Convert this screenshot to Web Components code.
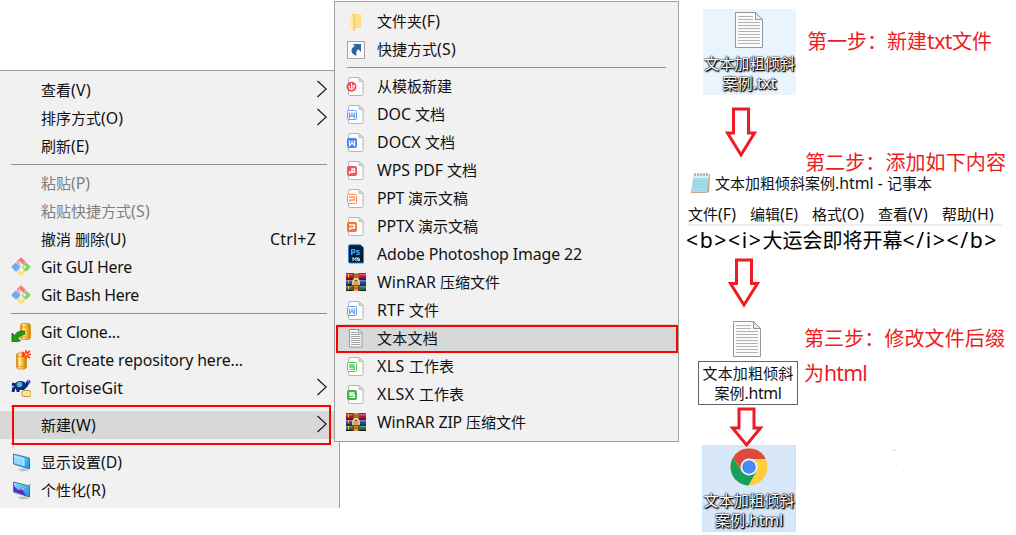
<!DOCTYPE html>
<html lang="zh-CN">
<head>
<meta charset="utf-8">
<title>新建 html 文件</title>
<style>
body{margin:0;background:#fff;width:1016px;height:535px;overflow:hidden;color:#111;font:15px/20px "Noto Sans","Noto Sans CJK SC",sans-serif}
</style>
</head>
<body>
<tutorial-board></tutorial-board>
<script>
const define=(name,html,setup)=>customElements.define(name,class extends HTMLElement{
  connectedCallback(){
    if(this.shadowRoot)return;
    const t=document.createElement('template');t.innerHTML=html;
    this.attachShadow({mode:'open'}).append(t.content.cloneNode(true));
    if(setup)setup(this,this.shadowRoot);
  }
});

/* One line of mixed text: Latin runs are set slightly larger and take up the slack of the width in w. */
define('fit-text','<style>:host{display:block;white-space:pre;width:max-content}div{width:max-content;height:1lh}::slotted(span){line-height:1px}</style><div><slot></slot></div>',(el,root)=>{
  const w=+el.getAttribute('w'),runs=el.textContent.match(/[\x20-\x7e]+|[^\x20-\x7e]+/g)||[];
  const spans=runs.map(r=>{
    const s=document.createElement('span');s.textContent=r;
    if(/^[\x20-\x7e]/.test(r)){s.dataset.latin='';s.style.fontSize='1.06em'}
    return s;
  });
  el.replaceChildren(...spans);
  if(!w)return;
  const latin=spans.filter(s=>'latin' in s.dataset),fit=latin.length?latin:spans;
  const n=fit.reduce((a,s)=>a+s.textContent.length,0);
  const gap=(w-root.querySelector('div').getBoundingClientRect().width)/n;
  fit.forEach(s=>s.style.letterSpacing=gap.toFixed(3)+'px');
});

const page='<path d="M4 1.500h9l4 4v12.500q0 1.500-1.500 1.500h-11.500q-1.500 0-1.500-1.500v-15q0-1.500 1.500-1.500z" fill="#fdfdfd" stroke="#b5b5b5"/><path d="M13 1.500v4h4z" fill="#ddd" stroke="#b5b5b5" stroke-width=".8"/>';
const office=(c,solid,d)=>page+`<rect x="1.500" y="6.500" width="9" height="9" rx="1" fill="${solid?c:'#fff'}" stroke="${c}"/><path d="${d}" fill="none" stroke="${solid?'#fff':c}" stroke-width="1.300"/>`;
const W='M3.500 8.500v5l2.500-2.500 2.500 2.500v-5M6 8.500v2.500',P='M3 9h5.500v3H4v2',S='M8.500 9H4v2h4.300v2.300H3.500';
const gitMark='<g transform="translate(10 10) rotate(45)"><rect x="-7" y="-7" width="7" height="6.600" rx="1" fill="#f67d7d"/><rect x=".2" y="-7" width="6.800" height="7" rx="1" fill="#8bcf68"/><rect x="-7" y=".2" width="7" height="6.800" rx="1" fill="#72aafa"/><rect x=".2" y=".4" width="6.800" height="6.600" rx="1" fill="#ffe18a"/></g><path d="M7.500 4.500l4 4M10.500 8v5" stroke="#f1f1f1" stroke-width="1.300"/><circle cx="13.500" cy="10" r="1.400" fill="#f1f1f1"/><circle cx="10.500" cy="13" r="1.400" fill="#f1f1f1"/><circle cx="10.500" cy="8" r="1.400" fill="#f1f1f1"/>';
const barrel=(x,y,w,h)=>`<defs><linearGradient id="g"><stop stop-color="#cc8500"/><stop offset=".3" stop-color="#fff0a0"/><stop offset=".6" stop-color="#f4bb2d"/><stop offset="1" stop-color="#c87d00"/></linearGradient></defs><rect x="${x}" y="${y}" width="${w}" height="${h}" rx="2.500" fill="url(#g)" stroke="#d08b12" stroke-width=".8"/><path d="M${x} ${y+3}q${w/2} 1.500 ${w} 0M${x} ${y+h-3}q${w/2} 1.500 ${w} 0" fill="none" stroke="#d5941a" stroke-width=".8"/>`;
const rar='<rect y="1" width="20" height="6" fill="#b91335"/><rect y="2" width="20" height="1.500" fill="#e0557a"/><rect y="7" width="20" height="6" fill="#30429a"/><rect y="8" width="20" height="1.500" fill="#6f80d0"/><rect y="13" width="20" height="6" fill="#157044"/><rect y="14" width="20" height="1.500" fill="#45a866"/><path d="M0 7h20M0 13h20M0 18.500h20" stroke="#1b1420"/><path d="M2.500 2v3.500M2.500 8v3.500M2.500 14v3.500" stroke="#ffba35"/><rect x="6.500" y="1" width="7" height="18" fill="#7b4420"/><path d="M8 1h4.500v6H8zM8 14h4v5H8z" fill="#e39c36"/><path d="M8 3h4M8 5h4M8 16h4" stroke="#76420f"/><path d="M7 13V9l2-2h2l2 2v4" fill="none" stroke="#ece9db" stroke-width="1.500"/><rect x="8" y="9" width="4" height="4" fill="#e7a22f"/>';
const monitor=a=>`<defs><linearGradient id="m" x2="1" y2="1"><stop stop-color="#8be0ff"/><stop offset="1" stop-color="#0d91e8"/></linearGradient></defs><path d="M6 17l8-.5 4 2-7 1z" fill="#b9c0c5"/><path d="M2.500 2l16 4v11l-16-5z" fill="url(#m)" stroke="#286283" stroke-width=".8"/>${a?'<path d="M3 6l5 5-5 .500zM3 11.500l8-2.500 4 6.500z" fill="#6921d6"/><path d="M9 9l2-.5 9-4.500-8.500 6z" fill="#d9e1e6" stroke="#607080" stroke-width=".5"/>':'<path d="M3 4l10 3v7L3 11z" fill="#8bdcff"/><path d="M3 4l10 3v7" fill="none" stroke="#cff3ff"/>'}`;
const icons={
  git:gitMark,
  clone:barrel(9.500,1.500,10,16)+'<path d="M1 20v-9l2.500 2.500Q6 8.500 13.500 9v3.500Q9 12.500 7 16.500L9.500 19z" fill="#239a18" stroke="#0c650b" stroke-width=".8"/>',
  create:barrel(5.500,3,10,16)+'<path d="M15 0v9M11 2l8 6M19 1l-8 6M11 4.500h9" stroke="#ff4215" stroke-width="1.600"/><circle cx="15.200" cy="4.500" r="1.300" fill="#ffc174"/>',
  tortoise:'<path d="M1 6l4 1M3 9l-1 5M7 11v3M15 8l2-4 2-.5" stroke="#111d87" stroke-width="3"/><path d="M3 8q1-5 7-5 5 0 6 6l-3 3H5z" fill="#0b2f78"/><circle cx="8.500" cy="6.500" r="2.800" fill="#52b6d5"/><circle cx="17.500" cy="3.500" r="1.800" fill="#1a42de"/><path d="M17 3h1" stroke="#fff"/><rect x="11" y="12.500" width="9" height="6" rx="2" fill="#ffe49a" stroke="#ae8021" stroke-width=".8"/>',
  display:monitor(0),personal:monitor(1),
  folder:'<path d="M6 3h9v14H6z" fill="#eabf53"/><path d="M8 3h7v14H8z" fill="#ffe08a"/><path d="M3 3l5 1.500V20l-4-2.500q-1-.5-1-2z" fill="#ffedaf"/><path d="M8 5v15" stroke="#e6b94d"/>',
  shortcut:'<rect x="1.500" y="2.500" width="17" height="17" fill="#fafafa" stroke="#a5a5a5"/><path d="M7 5h8v8l-2.700-2.700Q9.500 12 10.500 17 5 15 5.500 10.500 6 8.500 8.700 7z" fill="#2e639f"/>',
  template:page+'<circle cx="5.500" cy="10.800" r="5" fill="#f64858"/><path d="M5.500 7v6M3 9.500q0 4 2.500 4t3-4q-3 0-3 4" fill="none" stroke="#fff" stroke-width="1.100"/>',
  doc:office('#659cf7',0,W),docx:office('#4384f5',1,W),pdf:office('#ee5660',1,'M3.500 14v-2h5V9H6v4'),
  ppt:office('#ff8e5c',0,P),pptx:office('#fa7036',1,P),xls:office('#5ac65b',0,S),xlsx:office('#42b548',1,S),
  ps:'<path d="M4 .800h10.500l3 3V19H4q-1.500 0-1.500-1.500v-15Q2.500.800 4 .800z" fill="#001e36" stroke="#218bd5" stroke-width=".9"/><text x="4.200" y="11" font-family="Open Sans" font-size="9" font-weight="700" fill="#40b1ff">Ps</text><path d="M7 17v-3.500l1.500 2 1.500-2V17M13.500 14h-2v1.300h2v1.300h-2" fill="none" stroke="#e4f2fa"/>',
  rar,
  text:'<g transform="translate(-.500 0)"><path d="M4 1.500h9.500l3 3V19H4z" fill="#fafafa" stroke="#999"/><path d="M13 1.500V5H17" fill="none" stroke="#999"/><path d="M5.500 4.500H12M5.500 6.500h9.500M5.500 8.500h9.500M5.500 10.500h9.500M5.500 12.500h9.500M5.500 14.500h9.500M5.500 16.500h9.500" stroke="#999" stroke-width=".9"/></g>'
};
customElements.define('menu-icon',class extends HTMLElement{
  static observedAttributes=['name'];
  constructor(){
    super();
    this.attachShadow({mode:'open'}).innerHTML='<style>:host{display:block;width:20px;height:20px}svg{display:block}</style><svg width="20" height="20" viewBox="0 0 20 20"></svg>';
  }
  attributeChangedCallback(_,__,name){this.shadowRoot.querySelector('svg').innerHTML=icons[name]||''}
});

define('menu-item',`<style>
:host{display:flex;align-items:center;height:28px;box-sizing:border-box;padding-left:var(--inset);position:relative}
:host([active]){background:#d8d8d8}
:host([disabled]){color:#7f7f7f}
menu-icon{margin-left:var(--pull,0);margin-right:var(--gap);flex:none;margin-top:-1px}
.chev{margin-left:auto;margin-right:12px;margin-top:-2px;display:none}
:host([sub]) .chev{display:block}
.key{margin-left:auto;margin-right:23px}
.mark{display:none;position:absolute;border:2px solid #f00;box-sizing:border-box;inset:var(--mark)}
:host([active]) .mark{display:block}
</style><menu-icon></menu-icon>
<svg class="chev" width="11" height="18" viewBox="0 0 11 18"><path d="M1.500 1l8.700 8-8.700 8" fill="none" stroke="#1c1020" stroke-width="1.200"/></svg><div class="mark"></div>`,(el,root)=>{
  const icon=root.querySelector('menu-icon');
  icon.setAttribute('name',el.getAttribute('icon')||'');
  const line=(text,w,cls)=>{const f=document.createElement('fit-text');f.textContent=text;f.setAttribute('w',w);f.className=cls;return f};
  icon.after(line(el.getAttribute('label'),el.getAttribute('w'),'label'));
  const key=el.getAttribute('key');
  if(key)root.querySelector('.chev').before(line(key,46,'key'));
});
define('menu-line','<style>:host{display:block;height:9px;padding:4px var(--lineend,12px) 0 var(--line);box-sizing:border-box}div{height:1px;background:#919191}</style><div></div>');
define('context-menu','<style>:host{display:block;background:#f1f1f1;border:0 solid #a0a0a0;box-sizing:border-box}</style><slot></slot>');

define('red-arrow','<style>:host{display:block}svg{display:block;overflow:visible}path{fill:#fff;stroke:#ed1c24;stroke-width:3}</style><svg><path/></svg>',(el,root)=>{
  const h=+el.getAttribute('h'),k=+el.getAttribute('k'),w=+(el.getAttribute('w')||32),s=root.querySelector('svg');
  s.setAttribute('width',w);s.setAttribute('height',h);
  root.querySelector('path').setAttribute('d',`M${w/2-7.500} 2H${w/2+7.500}V${k}H${w-2.500}L${w/2} ${h-4}L2.500 ${k}H${w/2-7.500}Z`);
});
define('text-page',`<style>:host{display:block;width:28px;height:36px}svg{display:block}</style>
<svg width="28" height="36" viewBox="0 0 28 36"><path d="M.500.500h20l7 7v28H.500z" fill="#fafafa" stroke="#969696"/><path d="M20.500.500v7h7z" fill="#e8e8e8" stroke="#969696"/><path d="M3 4.500h15M3 7.500h15M3 10.500h22M3 13.500h22M3 16.500h22M3 19.500h22M3 22.500h22M3 25.500h22M3 28.500h22M3 31.500h22" stroke="#b4b4b4"/></svg>`);
define('chrome-logo',`<style>:host{display:block;width:38px;height:38px}svg{display:block}</style>
<svg width="38" height="38" viewBox="-19 -19 38 38"><circle r="18.500" fill="#ffcd40"/><path d="M-16 -9.250A18.500 18.500 0 0 1 16.700 -8H0L-7 4z" fill="#dc4a3e"/><path d="M-16 -9.250A18.500 18.500 0 0 0 -.5 18.500L7.400 4.250 0 8.500-7.400 4.250z" fill="#16a05d"/><circle r="8.500" fill="#f4f4f4"/><circle r="6.800" fill="#4a8af4"/></svg>`);
define('desktop-tile',`<style>:host{display:flex;flex-direction:column;align-items:center;box-sizing:border-box}
.name{color:#fff;line-height:20px;text-shadow:0 0 1px #000,0 0 2px #000,1px 1px 1px #000,1px 1px 2px #000;display:flex;flex-direction:column;align-items:center}</style>
<slot name="icon"></slot><div class="name"><slot></slot></div>`);

define('notepad-view',`<style>:host{display:block}
.title{display:flex;height:22px;align-items:center;padding-left:11px}
.title svg{margin-right:4px;flex:none}
.bar{display:flex;height:20px;margin-top:10px;margin-left:9px}
.bar fit-text{flex:none;margin-right:14px}
.rule{height:2px;width:315px;margin-left:8px;background:#f0f0f0}
.code{font-size:20px;line-height:30px;padding-left:7px;color:#000}</style>
<div class="title"><svg width="21" height="22" viewBox="0 0 21 22"><path d="M4 2h16l-1 18-3 1H1z" fill="#c7a779"/><path d="M4 2h15l-2 18H1z" fill="#a5dce9"/><path d="M4 2h15l-.4 4H3.300z" fill="#d9f1f5"/><path d="M3 9h14M3 12h14M2.500 15h14" stroke="#8bccda" stroke-width=".7"/><path d="M5 1v3M8 1v3M11 1v3M14 1v3M17 1v3" stroke="#718590"/></svg><fit-text w="217">文本加粗倾斜案例.html - 记事本</fit-text></div>
<div class="bar"><fit-text w="48">文件(F)</fit-text><fit-text w="48">编辑(E)</fit-text><fit-text w="52">格式(O)</fit-text><fit-text w="50">查看(V)</fit-text><fit-text w="52">帮助(H)</fit-text></div>
<div class="rule"></div><div class="code"><fit-text w="312">&lt;b&gt;&lt;i&gt;大运会即将开幕&lt;/i&gt;&lt;/b&gt;</fit-text></div>`);

const item=(label,w,icon='',extra='')=>`<menu-item label="${label}" w="${w}" icon="${icon}" ${extra}></menu-item>`;
define('tutorial-board',`<style>
:host{display:flex;width:1016px;height:535px}
.left{width:334px;flex:none;padding-top:70px;box-sizing:border-box}
.left context-menu{width:340px;height:438px;border-width:1px 1px 0 0;padding-top:5px;--inset:11px;--gap:10px;--line:11px;--mark:-6px 8px -6px 12px}
.mid{width:345px;flex:none;padding-top:1px;position:relative;z-index:1}
.mid context-menu{height:441px;border-width:1px;padding:5px 1px;--inset:11px;--gap:11px;--pull:-1px;--line:11px;--lineend:11px;--mark:1px -1px -1px 0}
.right{flex:1;min-width:0;display:flex;flex-direction:column;align-items:flex-start}
.note{color:#ed1c24;font-size:20px;line-height:35px}
.row{display:flex;align-items:flex-start}
.one{height:98px;margin-bottom:9px}
.one desktop-tile{width:93px;height:86px;margin:9px 11px 0 24px;background:#e9f4fc;padding-top:3px}
.one text-page{margin:0 2px 5px 0}
.last chrome-logo{margin-bottom:4px}
.one .note{margin-top:24px}
.a1{margin-left:46px}
.two{margin:-10px 0 0 126px;line-height:28px}
notepad-view{margin-top:-5px}
.a2{margin:2px 0 0 49px}
.three{height:86px;margin-top:12px}
.rename{width:100px;margin:0 6px 0 19px;display:flex;flex-direction:column;align-items:center}
.rename text-page{margin:0 2px 4px 0}
.box{border:1px solid #646464;width:100px;height:44px;box-sizing:border-box;display:flex;flex-direction:column;align-items:center;padding-top:1px}
.a3{margin:0 0 0 51px;position:relative;z-index:1}
.last{margin-top:-4px}
.last desktop-tile{width:94px;height:87px;margin-left:23px;background:#d8e8f8;border:1px solid #cfe4f6;padding-top:2px}
.last svg{margin:4px 0 0 95px}
</style>
<div class="left"><context-menu>
${item('查看(V)',50,'','sub')}${item('排序方式(O)',82,'','sub')}${item('刷新(E)',48)}<menu-line></menu-line>
${item('粘贴(P)',49,'','disabled')}${item('粘贴快捷方式(S)',109,'','disabled')}${item('撤消 删除(U)',85,'','key="Ctrl+Z"')}${item('Git GUI Here',91,'git')}${item('Git Bash Here',98,'git')}<menu-line></menu-line>
${item('Git Clone...',79,'clone')}${item('Git Create repository here...',202,'create')}${item('TortoiseGit',82,'tortoise','sub')}<menu-line></menu-line>
${item('新建(W)',55,'','sub active')}<menu-line></menu-line>
${item('显示设置(D)',81,'display')}${item('个性化(R)',65,'personal')}
</context-menu></div>
<div class="mid"><context-menu>
${item('文件夹(F)',63,'folder')}${item('快捷方式(S)',79,'shortcut')}<menu-line></menu-line>
${item('从模板新建',75,'template')}${item('DOC 文档',68,'doc')}${item('DOCX 文档',78,'docx')}${item('WPS PDF 文档',100,'pdf')}${item('PPT 演示文稿',91,'ppt')}${item('PPTX 演示文稿',101,'pptx')}${item('Adobe Photoshop Image 22',205,'ps')}${item('WinRAR 压缩文件',123,'rar')}${item('RTF 文件',62,'doc')}${item('文本文档',61,'text','active')}${item('XLS 工作表',77,'xls')}${item('XLSX 工作表',87,'xlsx')}${item('WinRAR ZIP 压缩文件',149,'rar')}
</context-menu></div>
<div class="right">
<div class="row one"><desktop-tile><text-page slot="icon"></text-page><fit-text w="91">文本加粗倾斜</fit-text><fit-text w="54">案例.txt</fit-text></desktop-tile><div class="note"><fit-text w="185">第一步：新建txt文件</fit-text></div></div>
<red-arrow class="a1" h="52" k="26"></red-arrow>
<div class="note two"><fit-text w="201">第二步：添加如下内容</fit-text></div>
<notepad-view></notepad-view>
<red-arrow class="a2" h="51" k="25.500"></red-arrow>
<div class="row three"><div class="rename"><text-page></text-page><div class="box"><fit-text w="91">文本加粗倾斜</fit-text><fit-text w="67">案例.html</fit-text></div></div><div class="note"><fit-text w="201">第三步：修改文件后缀</fit-text><fit-text w="63">为html</fit-text></div></div>
<red-arrow class="a3" h="42" k="21" w="33"></red-arrow>
<div class="row last"><desktop-tile><chrome-logo slot="icon"></chrome-logo><fit-text w="91">文本加粗倾斜</fit-text><fit-text w="68">案例.html</fit-text></desktop-tile><svg width="8" height="18"><path d="M0 1h6" stroke="#eee" stroke-width="2"/><path d="M5 16h1" stroke="#f8d58a"/></svg></div>
</div>`);
</script>
</body>
</html>
